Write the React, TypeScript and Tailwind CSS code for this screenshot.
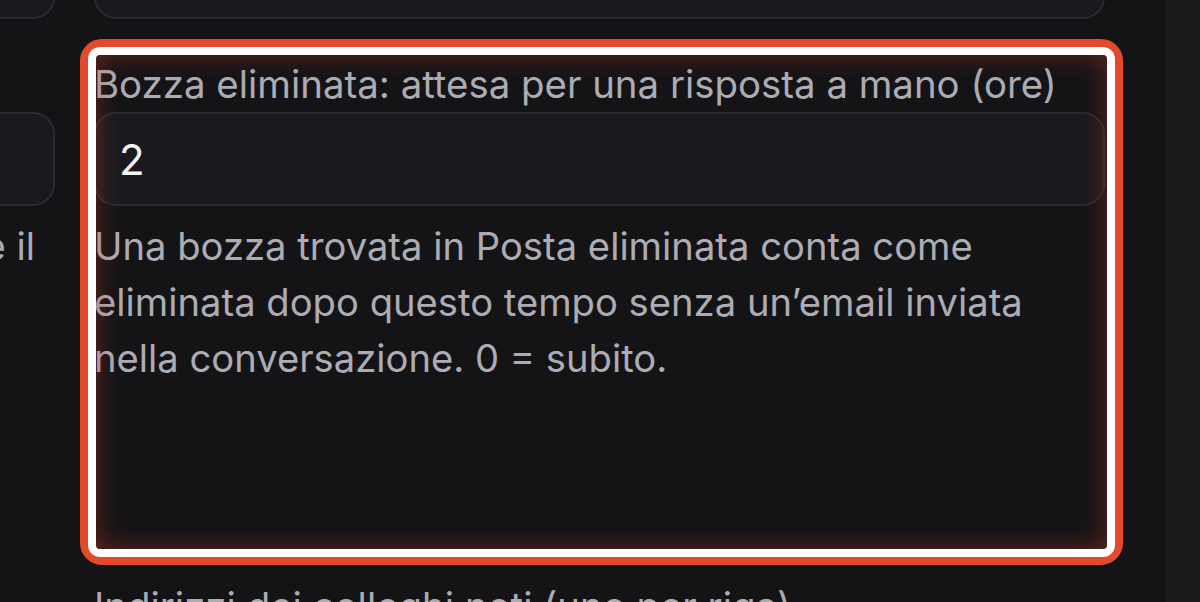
import React from "react";

function Field({
  label,
  value,
  help,
}: {
  label?: string;
  value?: string;
  help?: React.ReactNode;
}) {
  return (
    <div className="flex flex-col">
      {label && (
        <label className="whitespace-nowrap text-[38.4px] leading-[56px] text-[#acacb4]">
          {label}
        </label>
      )}
      <div className="flex h-[94px] items-center rounded-[22px] border-2 border-[#2a2a2f] bg-[#1a1a1e] px-[23px] text-[42px] text-[#f4f4f5]">
        {value}
      </div>
      {help}
    </div>
  );
}

export default function App() {
  return (
    <div className="flex h-[602px] w-[1200px] overflow-hidden bg-[#141417] font-['Inter',sans-serif]">
      <div className="min-w-0 flex-1 overflow-hidden">
        <div className="ml-[-645px] mt-[-131px] grid grid-cols-[700px_1011px] gap-x-[39px] gap-y-[37px]">
          {/* row 1 */}
          <Field label="Soglia di risposta" value="" />
          <Field label="Ritardo minimo di invio (minuti)" value="" />

          {/* row 2 */}
          <div className="flex flex-col">
            <div className="h-[56px]" />
            <div className="h-[94px] rounded-[22px] border-2 border-[#2a2a2f] bg-[#1a1a1e]" />
            <p className="mt-[12px] whitespace-nowrap pr-[20px] text-right text-[38.2px] leading-[56px] text-[#acacb4]">
              Tempo massimo prima che il
            </p>
          </div>
          <div className="relative min-h-[485px]">
            <Field
              label="Bozza eliminata: attesa per una risposta a mano (ore)"
              value="2"
              help={
                <p className="mt-[12px] text-[38.2px] leading-[56px] text-[#acacb4]">
                  Una bozza trovata in Posta eliminata conta come eliminata dopo
                  questo tempo senza un’email inviata nella conversazione. 0 =
                  subito.
                </p>
              }
            />
            {/* highlight ring */}
            <div className="pointer-events-none absolute -bottom-[24px] -left-[14px] -right-[18px] -top-[17px] rounded-[22px] border-8 border-[#e4492c]">
              <div className="h-full w-full rounded-[12px] border-8 border-white">
                <div className="h-full w-full rounded-[4px] shadow-[inset_0_0_26px_rgba(200,60,35,0.45)]" />
              </div>
            </div>
          </div>

          {/* row 3 */}
          <div />
          <label className="whitespace-nowrap text-[38.4px] leading-[56px] text-[#acacb4]">
            Indirizzi dei colleghi noti (uno per riga)
          </label>
        </div>
      </div>
      <div className="w-[35px] bg-[#1a1a1d]" />
    </div>
  );
}
